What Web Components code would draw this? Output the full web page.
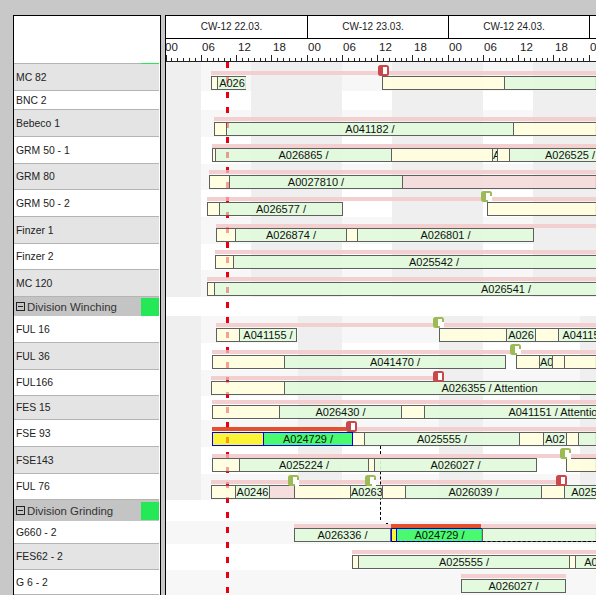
<!DOCTYPE html>
<html><head><meta charset="utf-8">
<style>
html,body{margin:0;padding:0;height:595px;overflow:hidden;background:#c8c8c8;font-family:"Liberation Sans",Arial,sans-serif}
</style></head><body>
<gantt-app></gantt-app>
<script>
const D=[
 {n:'MC 82',t:64,h:27,g:1,bg:'a',p:71,b:76,bars:[[211,35,[[6,'y'],[28,'g','A026']]],[382,214,[[122,'y'],[92,'g']]]],pink:[[211,167],[388,208]],m:[[378,'r']]},
 {n:'BNC 2',t:91,h:19,bg:'b',bars:[],pink:[]},
 {n:'Bebeco 1',t:110,h:27,g:1,bg:'a',p:117,b:122,bars:[[214,382,[[12,'y'],[287,'g','A041182 /'],[82,'y']]]],pink:[[214,382]]},
 {n:'GRM 50 - 1',t:137,h:27,bg:'b',p:144,b:148,bars:[[212,420,[[3,'y'],[176,'g','A026865 /'],[101,'y'],[5,'g','A'],[12,'y'],[120,'g','A026525 /']]]],pink:[[212,384]]},
 {n:'GRM 80',t:164,h:26,g:1,bg:'a',p:170,b:175,bars:[[209,387,[[20,'y'],[173,'g','A0027810 /'],[193,'p']]]],pink:[[209,387]]},
 {n:'GRM 50 - 2',t:190,h:27,bg:'b',p:197,b:202,bars:[[207,136,[[12,'y'],[122,'g','A026577 /']]],[487,109,[[109,'y']]]],pink:[[207,274],[492,104]],m:[[481,'g']]},
 {n:'Finzer 1',t:217,h:27,g:1,bg:'a',p:224,b:228,bars:[[216,318,[[19,'y'],[111,'g','A026874 /'],[11,'y'],[175,'g','A026801 /']]]],pink:[[216,380]]},
 {n:'Finzer 2',t:244,h:26,bg:'b',p:250,b:255,bars:[[215,420,[[18,'y'],[400,'g','A025542 /']]]],pink:[[215,381]]},
 {n:'MC 120',t:270,h:27,g:1,bg:'a',p:277,b:282,bars:[[207,600,[[7,'y'],[582,'g','A026541 /']]]],pink:[[207,389]]},
 {div:'Division Winching',t:297,h:19},
 {n:'FUL 16',t:316,h:27,bg:'c',p:323,b:328,bars:[[216,81,[[23,'y'],[56,'g','A041155 /']]],[439,170,[[67,'y'],[29,'g','A026'],[23,'y'],[44,'g','A04115']]]],pink:[[216,217],[444,152]],m:[[433,'g']]},
 {n:'FUL 36',t:343,h:27,g:1,bg:'d',p:350,b:355,bars:[[212,294,[[72,'y'],[220,'g','A041470 /']]],[516,80,[[23,'y'],[13,'g','A0'],[12,'y'],[32,'y']]]],pink:[[212,298],[521,75]],m:[[510,'g']]},
 {n:'FUL166',t:370,h:26,bg:'c',p:376,b:381,bars:[[211,490,[[73,'y'],[409,'g','A026355 / Attention']]]],pink:[[211,222]],m:[[433,'r']]},
 {n:'FES 15',t:396,h:24,g:1,bg:'d',p:400,b:405,bars:[[212,480,[[67,'y'],[122,'g','A026430 /'],[23,'y'],[262,'g','A041151 / Attention']]]],pink:[[212,384]]},
 {n:'FSE 93',t:420,h:27,bg:'c',p:427,b:432,bars:[[212,141,[[51,'Y'],[88,'G','A024729 /']],1],[352,244,[[12,'y'],[155,'g','A025555 /'],[24,'y'],[23,'g','A02'],[12,'y'],[17,'g']]]],pink:[[356,240]],red:[[212,134]],m:[[346,'r']]},
 {n:'FSE143',t:447,h:27,g:1,bg:'d',p:454,b:458,bars:[[212,325,[[27,'y'],[129,'g','A025224 /'],[6,'y'],[161,'g','A026027 /']]],[566,30,[[30,'y']]]],pink:[[212,348],[571,25]],m:[[560,'g']]},
 {n:'FUL 76',t:474,h:26,bg:'c',p:480,b:485,bars:[[211,400,[[24,'y'],[34,'g','A0246'],[25,'p'],[56,'y'],[32,'g','A0263'],[23,'y'],[136,'g','A026039 /'],[23,'y'],[38,'g','A025']]]],pink:[[211,77],[299,66],[381,175]],m:[[288,'g'],[365,'g'],[556,'r']]},
 {div:'Division Grinding',t:500,h:21},
 {n:'G660 - 2',t:521,h:23,bg:'e',p:524,b:528,bars:[[294,97,[[95,'g','A026336 /']]],[391,91,[[5,'Y'],[85,'G','A024729 /']],1],[482,114,[[114,'g']]]],pink:[[294,97],[481,115]],red:[[391,90]]},
 {n:'FES62 - 2',t:544,h:26,g:1,bg:'w',p:550,b:555,bars:[[352,260,[[6,'y'],[211,'g','A025555 /'],[6,'y'],[30,'g','A0']]]],pink:[[352,244]]},
 {n:'G 6 - 2',t:570,h:25,bg:'e',p:574,b:579,bars:[[461,105,[[103,'g','A026027 /']]]],pink:[[461,105]]}
];
const OX=166;
const C={y:'rgba(255,254,222,.9)',g:'rgba(224,250,218,.9)',p:'rgba(245,218,218,.9)',Y:'rgba(251,242,32,.9)',G:'rgba(54,248,96,.9)'};

class GanttRowLabel extends HTMLElement{
 constructor(){super();this.attachShadow({mode:'open'}).innerHTML=`<style>
 :host{display:flex;align-items:center;box-sizing:border-box;padding:0 0 0 2px;font:10.4px "Liberation Sans",Arial,sans-serif;color:#222;border-bottom:1px solid #b4b4b4;background:#fff;white-space:nowrap}
 :host([shade]){background:#e4e4e4}
 </style><slot></slot>`}
}
class GanttDivision extends HTMLElement{
 constructor(){super();this.attachShadow({mode:'open'}).innerHTML=`<style>
 :host{display:flex;align-items:center;box-sizing:border-box;padding-left:2px;gap:2px;font:11.4px "Liberation Sans",Arial,sans-serif;color:#333;background:#c4c4c4}
 svg{flex:none}
 .t{flex:1;white-space:nowrap}
 .s{width:18px;height:18px;background:#25e856;flex:none}
 </style><svg width="9" height="9" viewBox="0 0 9 9"><rect x=".5" y=".5" width="8" height="8" fill="none" stroke="#222"/><path d="M2 4.500h5" stroke="#222"/></svg><span class="t"><slot></slot></span><span class="s"></span>`}
}
class GanttBar extends HTMLElement{
 constructor(){super();this.attachShadow({mode:'open'}).innerHTML=`<style>
 :host{position:absolute;height:14px;box-sizing:border-box;border:1px solid #5f5f5f;display:flex;z-index:2}
 :host([sel]){border-color:#0000e6;z-index:3}
 </style><slot></slot>`}
}
class GanttSeg extends HTMLElement{
 constructor(){super();this.attachShadow({mode:'open'}).innerHTML=`<style>
 :host{display:block;box-sizing:border-box;height:12px;flex:none;border-right:1px solid var(--sep,#5f5f5f);text-align:center;font:11px/12px "Liberation Sans",Arial,sans-serif;color:#111;white-space:nowrap;overflow:hidden}
 :host(:last-child){border-right:0}
 </style><slot></slot>`}
}
class GanttMarker extends HTMLElement{
 constructor(){super();this.attachShadow({mode:'open'}).innerHTML=`<style>
 :host{position:absolute;width:11px;height:11px;display:block;z-index:4}
 svg{display:block}
 </style><svg width="11" height="11" viewBox="0 0 11 11"><rect x="0" y="0" width="11" height="11" rx="2.500" fill="var(--c)"/><path d="M5 2H9V9H5z" fill="#fff"/><path class="o" d="M9 5h2v6H7V9h2z" fill="var(--o,transparent)"/></svg>`}
}
class GanttRow extends HTMLElement{
 constructor(){super();this.attachShadow({mode:'open'}).innerHTML=`<style>
 :host{display:block;position:relative;background:var(--bg,#fff)}
 </style><slot></slot>`}
}
class GanttHeader extends HTMLElement{
 constructor(){super();
  let days='',hours='';
  ['CW-12 22.03.','CW-12 23.03.','CW-12 24.03.',''].forEach((d,i)=>{days+=`<div class="d" style="${i==0?'flex-basis:142px;':''}${i==3?'flex:1;':''}">${d}</div>`});
  for(let i=0;i<13;i++){const h=['00','06','12','18'][i%4];hours+=`<span class="h" style="left:${Math.round(i*35.25)+(i?1:-1)}px">${h}</span>`}
  let p='';for(let i=0;i<=72;i++){const x=Math.floor(i*5.875)+.5,big=i%6==0;p+=`M${x} ${big?6:9}V12`}
  this.attachShadow({mode:'open'}).innerHTML=`<style>
  :host{display:block;flex:none;background:#fff;font-family:"Liberation Sans",Arial,sans-serif;color:#222;position:relative}
  .days{display:flex;height:22px;border-bottom:1px solid #000}
  .d{flex:0 0 141px;box-sizing:border-box;border-right:1px solid #000;padding-right:10px;font-size:10px;text-align:center;line-height:22px;white-space:nowrap;overflow:hidden}
  .d:last-child{border-right:0}
  .hours{position:relative;height:22px;border-bottom:1px solid #222;overflow:hidden}
  .h{position:absolute;top:2px;font-size:11.5px}
  svg{position:absolute;left:0;top:10px}
  </style><div class="days">${days}</div><div class="hours">${hours}<svg width="430" height="12"><path d="${p}" stroke="#222" fill="none"/></svg></div>`;
 }
}
class GanttApp extends HTMLElement{
 constructor(){super();const s=this.attachShadow({mode:'open'});
  s.innerHTML=`<style>
  :host{display:flex;gap:4px;padding:15px 0 0 13px;height:595px;box-sizing:border-box;align-items:stretch;overflow:hidden}
  .left{width:148px;flex:none;box-sizing:border-box;border:solid #000;border-width:1px 1px 0 1px;padding-right:1px;display:flex;flex-direction:column;background:#fff;overflow:hidden}
  .corner{height:47px;flex:none;background:#fff;border-bottom:1px solid #b4b4b4;position:relative}
  .corner i{position:absolute;right:0;bottom:-1px;width:18px;height:1px;background:#25e856}
  .right{flex:1;box-sizing:border-box;border:solid #000;border-width:1px 0 0 1px;display:flex;flex-direction:column;background:#fff;overflow:hidden;position:relative;min-width:0;isolation:isolate}
  .rows{flex:1}
  .now{position:absolute;left:60px;top:46px;bottom:0;width:3px;z-index:1;background:repeating-linear-gradient(180deg,#e60012 0 6px,transparent 6px 15px)}
  .over{z-index:5;opacity:.3}
  .dash1{position:absolute;left:214px;top:430px;height:74px;width:0;border-left:1px dashed #000;z-index:1}
  .dash2{position:absolute;left:220px;top:507px;height:1px;width:2px;background:#000;z-index:1}
  .dash3{position:absolute;left:226px;top:525px;right:0;height:0;border-top:1px dashed #000;z-index:4}
  </style><div class="left"><div class="corner"><i></i></div><div class="l"></div></div><div class="right"><gantt-header></gantt-header><div class="rows"><gantt-row class="sp" style="height:2px"></gantt-row></div><div class="now"></div><div class="now over"></div><div class="dash1"></div><div class="dash2"></div><div class="dash3"></div></div>`;
  const l=s.querySelector('.l'),r=s.querySelector('.rows');
  const gr=(L,n)=>{let o=['#efefef 0 35px'],x=35;for(let i=0;i<3;i++){o.push(`${L} ${x}px ${x+n}px`);o.push(`#efefef ${x+n}px ${x+141}px`);x+=141}return `linear-gradient(90deg,${o.join(',')})`};
  const bands={a:gr('#f7f7f7',50),b:gr('#fff',50),c:gr('#f7f7f7',97),d:gr('#fff',97),e:'#f7f7f7',w:'#fff'};
  s.querySelector('.sp').style.setProperty('--bg',bands.a);
  D.forEach(d=>{
   if(d.div){const e=document.createElement('gantt-division');e.textContent=d.div;e.style.height=d.h+'px';l.append(e);
     const rr=document.createElement('gantt-row');rr.style.height=d.h+'px';r.append(rr);return}
   const e=document.createElement('gantt-row-label');e.textContent=d.n;e.style.height=d.h+'px';if(d.g)e.setAttribute('shade','');l.append(e);
   const rr=document.createElement('gantt-row');rr.style.height=d.h+'px';rr.style.setProperty('--bg',bands[d.bg]);
   const add=(el,css)=>{el.style.cssText+=css;rr.append(el)};
   (d.pink||[]).forEach(([x,w])=>{const p=document.createElement('div');add(p,`position:absolute;z-index:2;left:${x-OX}px;width:${w}px;top:${d.p-d.t}px;height:4px;background:#f3cfd0`)});
   (d.red||[]).forEach(([x,w])=>{const p=document.createElement('div');add(p,`position:absolute;z-index:2;left:${x-OX}px;width:${w}px;top:${d.p-d.t}px;height:4px;background:#e4502f`)});
   d.bars.forEach(([x,w,segs,sel])=>{const b=document.createElement('gantt-bar');if(sel)b.setAttribute('sel','');
     add(b,`left:${x-OX}px;width:${w}px;top:${d.b-d.t}px;`);
     segs.forEach(([sw,c,t])=>{const g=document.createElement('gantt-seg');g.style.width=sw+'px';g.style.background=C[c];if(sel)g.style.setProperty('--sep','#0000e6');if(t)g.textContent=t;b.append(g)});
   });
   (d.m||[]).forEach(([x,c])=>{const m=document.createElement('gantt-marker');m.style.setProperty('--c',c=='r'?'#c8484c':'#9dbb55');if(c=='g')m.style.setProperty('--o','#fff');add(m,`left:${x-OX}px;top:1px;`)});
   r.append(rr);
  });
 }
}
[['gantt-row-label',GanttRowLabel],['gantt-division',GanttDivision],['gantt-bar',GanttBar],['gantt-seg',GanttSeg],['gantt-marker',GanttMarker],['gantt-row',GanttRow],['gantt-header',GanttHeader],['gantt-app',GanttApp]].forEach(([n,c])=>customElements.define(n,c));
</script></body></html>
